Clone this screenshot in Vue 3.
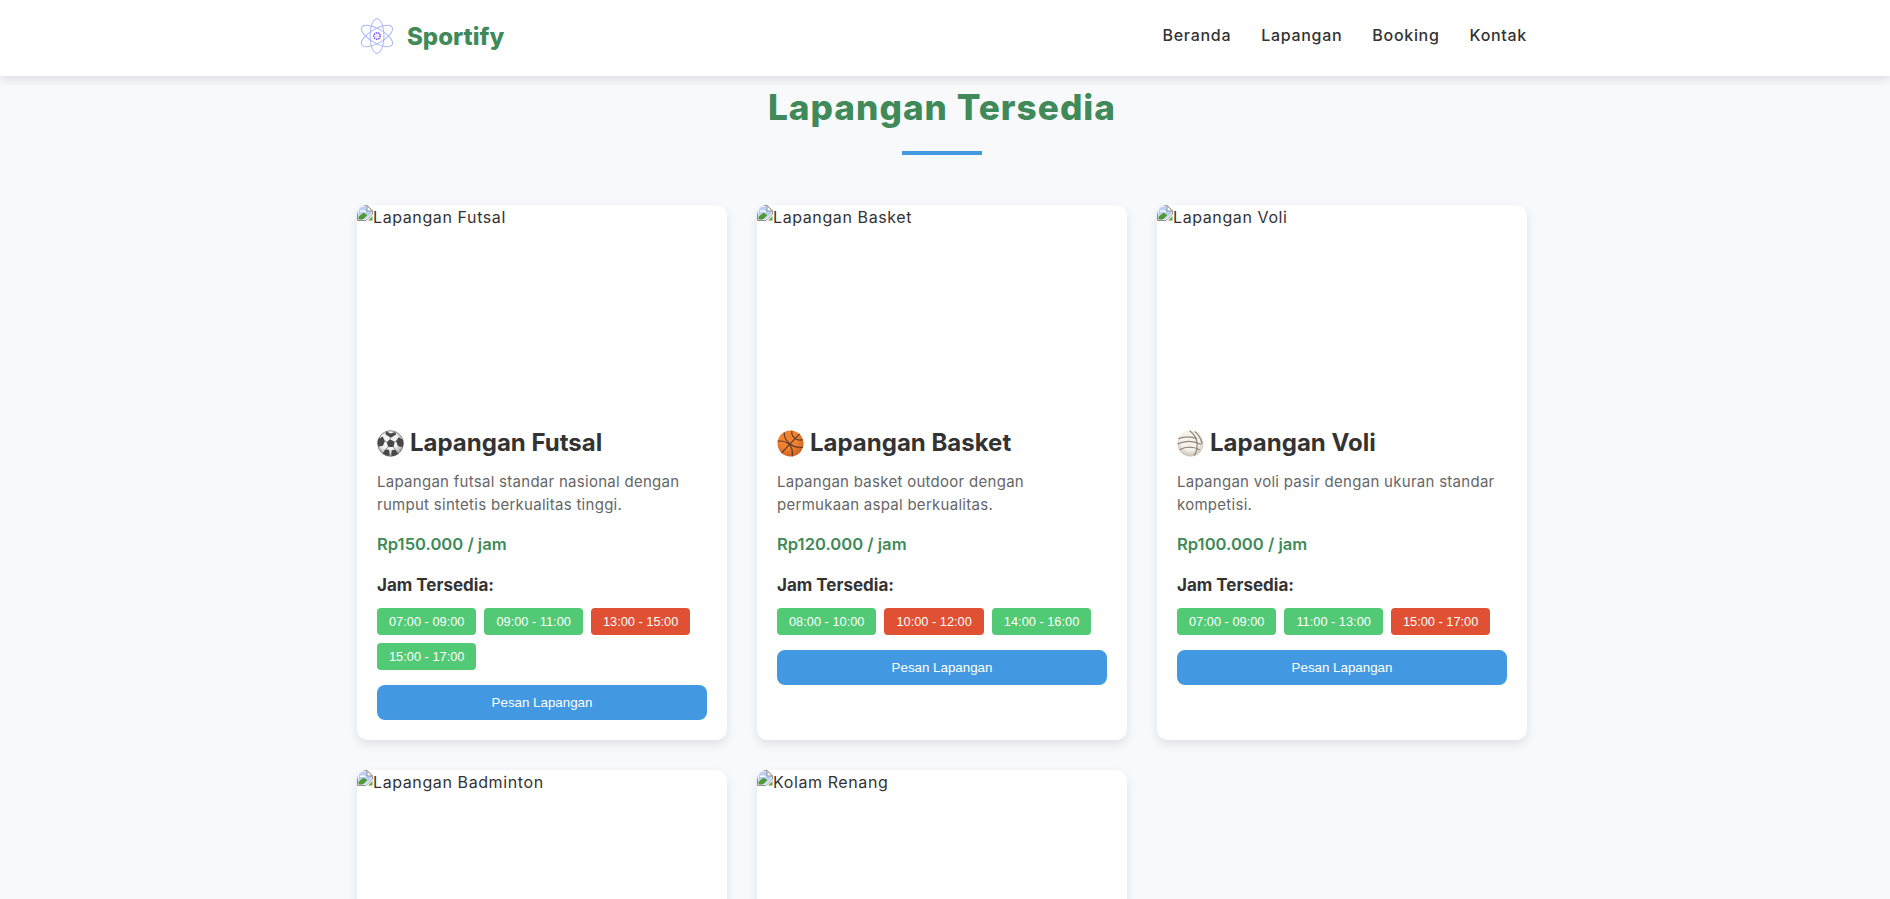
<template>
  <div class="page">
    <header class="navbar">
      <div class="nav-inner">
        <a class="logo">
          <svg class="logo-icon" viewBox="0 0 36 36" width="36" height="36" fill="none">
            <g stroke="#aab6fb" stroke-width="1">
              <ellipse cx="18" cy="18" rx="7" ry="17.500" transform="rotate(-60 18 18)" />
              <ellipse cx="18" cy="18" rx="7" ry="17.500" transform="rotate(60 18 18)" />
              <ellipse cx="18" cy="18" rx="7" ry="17.500" />
            </g>
            <circle cx="18" cy="18" r="3.200" stroke="#8462e8" stroke-width="1.700" stroke-dasharray="1.500 .7" />
            <circle cx="18" cy="18" r="1.300" fill="#e4e0fc" />
          </svg>
          <span>Sportify</span>
        </a>
        <nav class="nav-links">
          <a v-for="link in links" :key="link">{{ link }}</a>
        </nav>
      </div>
    </header>

    <main class="content">
      <h2 class="section-title">Lapangan Tersedia</h2>
      <div class="title-bar"></div>

      <div class="field-grid">
        <div v-for="field in fields" :key="field.name" class="field-card">
          <div class="field-image">
            <svg class="broken-icon" viewBox="0 0 16 16" width="16" height="16">
              <path d="M.5.5H10L15.500 6v3L9 15.500H.5z" fill="#fff" stroke="#8f8f8f" />
              <path d="M1.500 1.500h8L14.500 6.500v2L8 14.500H1.500z" fill="#b9d0f6" />
              <path d="M3 7c0-1.600 2-2.200 3-1.200C7 5.200 8.800 5.800 8.800 7z" fill="#fff" />
              <path d="M1.500 14.500v-2.700L6.500 7.700l3.800 2.300-4.500 4.500z" fill="#4f9a30" />
              <path d="M15.500 11v4.500H11z" fill="#64a343" />
              <path d="M10 .5V6h5.500z" fill="#fff" stroke="#8f8f8f" />
            </svg>
            <span class="alt-text">{{ field.alt }}</span>
          </div>
          <div v-if="field.desc" class="field-body">
            <h3 class="field-name">
              <svg v-if="field.icon === 'futsal'" class="emoji" viewBox="0 0 28 28" width="27" height="27">
                <defs>
                  <radialGradient id="ballShade" cx="45%" cy="40%" r="62%">
                    <stop offset="0.55" stop-color="#f2f2f2" />
                    <stop offset="1" stop-color="#9a9a9a" />
                  </radialGradient>
                </defs>
                <circle cx="14" cy="14" r="13.300" fill="url(#ballShade)" stroke="#6c6c6c" stroke-width=".8" />
                <g fill="#484848">
                  <path d="M13.500 9.500l4.800 2.800-1.200 5.400h-5.400l-1.600-5z" />
                  <path d="M9.500 1.300L14 3.500l5-1.400.8 2.600-5.400 3.300-5.800-3.500z" />
                  <path d="M1 9.500l4.800-2.800 2.400 4.700-2 5-4.700 .8C.6 15 .4 12 1 9.500z" />
                  <path d="M27 10l-4.500-2.500-2.800 4 2.200 5.300 4.800 .8C27.500 15 27.600 12.400 27 10z" />
                  <path d="M6 24l2.500-3.800 4 .3.700 6.300C10.800 26.800 8 25.800 6 24z" />
                  <path d="M22 24.500l-2.800-4-4 .6-.4 6.100C17.500 27 20 26 22 24.500z" />
                </g>
                <g stroke="#6a6a6a" stroke-width=".8">
                  <path d="M13.500 9.500V8M18.300 12.300l1.400-.8M17.100 17.700l2 2.700M11.700 17.700l-3 2.500M10.100 12.700l-2-1.300" />
                </g>
              </svg>
              <svg v-else-if="field.icon === 'basket'" class="emoji" viewBox="0 0 28 28" width="27" height="27">
                <defs>
                  <radialGradient id="basketShade" cx="42%" cy="35%" r="70%">
                    <stop offset="0.5" stop-color="#ef8233" />
                    <stop offset="1" stop-color="#cf5a1e" />
                  </radialGradient>
                </defs>
                <circle cx="14" cy="14" r="13.500" fill="url(#basketShade)" />
                <g fill="none" stroke="#5f3d2a" stroke-width="1.200">
                  <path d="M4.500 24L23.500 4" />
                  <path d="M7.500 2.500c-.5 6.500 6 17 19.500 15.500" />
                  <path d="M.8 11.500c6-.5 11.500 2 13.700 6 1.600 3 1.800 6 1.300 9.800" />
                  <path d="M15.500 .8c-1 3.500 1 7.500 5 9 2.200 .8 4.500 .8 6 .2" />
                </g>
              </svg>
              <svg v-else class="emoji" viewBox="0 0 28 28" width="27" height="27">
                <defs>
                  <radialGradient id="voliShade" cx="50%" cy="38%" r="68%">
                    <stop offset="0.55" stop-color="#f6f2ea" />
                    <stop offset="1" stop-color="#b9b1a6" />
                  </radialGradient>
                </defs>
                <circle cx="14" cy="14" r="13.500" fill="url(#voliShade)" />
                <g fill="none" stroke="#8f877c" stroke-width="1.300">
                  <path d="M1.500 9c6-2.500 13-2.500 19.500 0" />
                  <path d="M.7 14.500c7-3.500 16-3.500 24.500 .5" />
                  <path d="M2.500 20.500c7-3.500 14-3.500 21 0" />
                  <path d="M13 .8c4.500 3 7.500 8 8 14 .2 4-1 8-3 11.700" />
                  <path d="M18.500 1.500c4 3 6.500 7.500 7.500 13" />
                </g>
              </svg>
              {{ field.name }}
            </h3>
            <p class="field-desc">{{ field.desc }}</p>
            <p class="field-price">{{ field.price }}</p>
            <h4 class="slots-title">Jam Tersedia:</h4>
            <div class="slots">
              <span
                v-for="slot in field.slots"
                :key="slot.time"
                class="slot"
                :class="{ booked: slot.booked }"
              >{{ slot.time }}</span>
            </div>
            <button class="btn-book">Pesan Lapangan</button>
          </div>
        </div>
      </div>
    </main>
  </div>
</template>

<script setup>
const links = ['Beranda', 'Lapangan', 'Booking', 'Kontak']

const fields = [
  {
    name: 'Lapangan Futsal',
    alt: 'Lapangan Futsal',
    icon: 'futsal',
    desc: 'Lapangan futsal standar nasional dengan rumput sintetis berkualitas tinggi.',
    price: 'Rp150.000 / jam',
    slots: [
      { time: '07:00 - 09:00' },
      { time: '09:00 - 11:00' },
      { time: '13:00 - 15:00', booked: true },
      { time: '15:00 - 17:00' }
    ]
  },
  {
    name: 'Lapangan Basket',
    alt: 'Lapangan Basket',
    icon: 'basket',
    desc: 'Lapangan basket outdoor dengan permukaan aspal berkualitas.',
    price: 'Rp120.000 / jam',
    slots: [
      { time: '08:00 - 10:00' },
      { time: '10:00 - 12:00', booked: true },
      { time: '14:00 - 16:00' }
    ]
  },
  {
    name: 'Lapangan Voli',
    alt: 'Lapangan Voli',
    icon: 'voli',
    desc: 'Lapangan voli pasir dengan ukuran standar kompetisi.',
    price: 'Rp100.000 / jam',
    slots: [
      { time: '07:00 - 09:00' },
      { time: '11:00 - 13:00' },
      { time: '15:00 - 17:00', booked: true }
    ]
  },
  { name: 'Lapangan Badminton', alt: 'Lapangan Badminton' },
  { name: 'Kolam Renang', alt: 'Kolam Renang' }
]
</script>

<style>
html, body {
  margin: 0;
  height: 100%;
  overflow: hidden;
  background: #f8f9fb;
}
</style>

<style scoped>
.page {
  height: 899px;
  overflow: hidden;
  background: #f8f9fb;
  font-family: Inter, "Noto Sans", sans-serif;
  color: #333;
}
.navbar {
  height: 76px;
  background: #fff;
  box-shadow: 0 2px 10px rgba(0,0,0,0.15);
  position: relative;
}
.nav-inner {
  width: 1170px;
  margin-left: 357px;
  height: 72px;
  display: flex;
  align-items: center;
  justify-content: space-between;
}
.logo {
  display: flex;
  align-items: center;
  gap: 12px;
  margin-left: 2px;
  font-size: 24px;
  font-weight: 800;
  color: #408a5a;
}
.nav-links {
  display: flex;
  gap: 30px;
  margin-bottom: 2px;
  font-size: 16px;
  font-weight: 500;
  letter-spacing: 0.7px;
}
.content {
  width: 1170px;
  margin-left: 357px;
}
.section-title {
  margin: 7px 0 0;
  text-align: center;
  font-size: 35.2px;
  line-height: 48px;
  font-weight: 800;
  letter-spacing: 1px;
  color: #408a5a;
}
.title-bar {
  width: 80px;
  height: 4px;
  margin: 20px auto 50px;
  background: #4299e1;
}
.field-grid {
  display: grid;
  grid-template-columns: repeat(3, 370px);
  gap: 30px;
}
.field-card {
  background: #fff;
  border-radius: 10px;
  overflow: hidden;
  box-shadow: 0 4px 10px rgba(0,0,0,0.1);
}
.field-image {
  height: 200px;
  display: flex;
  align-items: flex-start;
  font-size: 16px;
  line-height: 24px;
}
.alt-text {
  letter-spacing: 0.6px;
}
.broken-icon {
  flex: none;
}
.field-body {
  padding: 20px;
}
.field-name {
  margin: 0;
  display: flex;
  align-items: center;
  gap: 6px;
  font-size: 24px;
  line-height: 36px;
  font-weight: 700;
}
.emoji {
  flex: none;
}
.field-desc {
  margin: 9px 0 0;
  font-size: 15px;
  line-height: 23px;
  letter-spacing: 0.28px;
  color: #666;
}
.field-price {
  margin: 15px 0 0;
  font-size: 16.6px;
  line-height: 26px;
  font-weight: 600;
  color: #408a5a;
}
.slots-title {
  margin: 15px 0 0;
  font-size: 17px;
  line-height: 26px;
  font-weight: 700;
}
.slots {
  display: flex;
  flex-wrap: wrap;
  gap: 8px;
  margin-top: 10px;
}
.slot {
  padding: 0 12px;
  height: 27px;
  line-height: 27px;
  border-radius: 4px;
  background: #52c974;
  color: #fff;
  font-family: "Liberation Sans", Arial, sans-serif;
  font-size: 12.8px;
}
.slot.booked {
  background: #e05032;
}
.btn-book {
  display: block;
  width: 100%;
  height: 35px;
  margin-top: 15px;
  border: none;
  border-radius: 8px;
  background: #4299e1;
  color: #fff;
  font-family: "Liberation Sans", Arial, sans-serif;
  font-size: 13.33px;
}
</style>
